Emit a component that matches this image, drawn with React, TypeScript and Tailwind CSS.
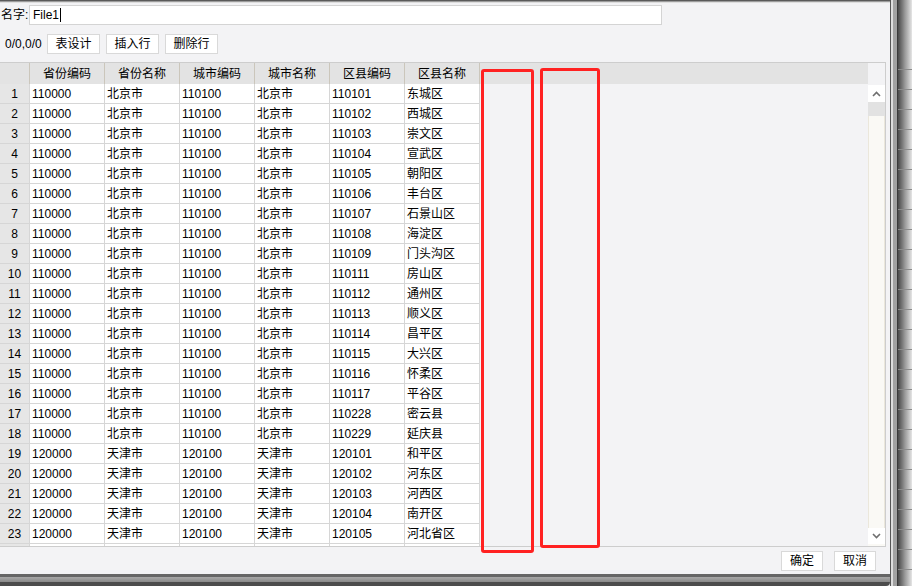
const HEADERS = ['省份编码', '省份名称', '城市编码', '城市名称', '区县编码', '区县名称'];

const DISTRICTS: [string, string][] = [
  ['110101', '东城区'],
  ['110102', '西城区'],
  ['110103', '崇文区'],
  ['110104', '宣武区'],
  ['110105', '朝阳区'],
  ['110106', '丰台区'],
  ['110107', '石景山区'],
  ['110108', '海淀区'],
  ['110109', '门头沟区'],
  ['110111', '房山区'],
  ['110112', '通州区'],
  ['110113', '顺义区'],
  ['110114', '昌平区'],
  ['110115', '大兴区'],
  ['110116', '怀柔区'],
  ['110117', '平谷区'],
  ['110228', '密云县'],
  ['110229', '延庆县'],
  ['120101', '和平区'],
  ['120102', '河东区'],
  ['120103', '河西区'],
  ['120104', '南开区'],
  ['120105', '河北省区'],
];

const ROWS = DISTRICTS.map(([code, name]) => {
  const bj = code.startsWith('11');
  return bj
    ? ['110000', '北京市', '110100', '北京市', code, name]
    : ['120000', '天津市', '120100', '天津市', code, name];
});

// partially scrolled-in row at the bottom, only its grid lines show
const BLANK = ['', '', '', '', '', ''];

const FONT = "font-['Liberation_Sans','Noto_Sans_CJK_SC',sans-serif]";

function Chevron({ down }: { down?: boolean }) {
  return (
    <svg width="9" height="6" viewBox="0 0 9 6" className={down ? 'rotate-180' : ''}>
      <path d="M1 5 L4.5 1.5 L8 5" fill="none" stroke="#6f6f6f" strokeWidth="1.6" />
    </svg>
  );
}

function Btn({ label, w }: { label: string; w: string }) {
  return (
    <div
      className={`${w} h-[20px] bg-white border border-[#d9d9d9] flex items-center justify-center leading-none whitespace-nowrap`}
    >
      {label}
    </div>
  );
}

function Row({ num, cells }: { num: string; cells: string[] }) {
  return (
    <div className="h-[20px] flex">
      <div className="w-[30px] border-r border-b border-[#d6d6d6] bg-[#e6e6e6] flex items-center justify-center leading-none">
        {num}
      </div>
      {cells.map((c, j) => (
        <div
          key={j}
          className="w-[75px] bg-white border-r border-b border-[#d6d6d6] flex items-center pl-[2px] leading-none whitespace-nowrap"
        >
          {c}
        </div>
      ))}
    </div>
  );
}

export default function App() {
  return (
    <div className={`w-[912px] h-[586px] overflow-hidden flex bg-[#e8e8e8] text-[12px] text-black ${FONT}`}>
      <div className="w-[890px] flex flex-col">
        {/* dialog */}
        <div className="relative h-[574px] flex flex-col bg-[#f3f3f5]">
          <div className="h-[1px] bg-[#5a5a5a]" />
          <div className="h-[1px] bg-[#9c9c9c]" />
          <div className="h-[1px] bg-[#dedede]" />

          <div className="mt-[2px] h-[20px] flex items-center">
            <span className="w-[29px] shrink-0 pl-[1px] leading-none whitespace-nowrap">名字:</span>
            <div className="w-[633px] h-[20px] bg-white border border-[#d4d4d4] flex items-center pl-[3px] leading-none">
              File1<span className="w-[1px] h-[14px] bg-black ml-[1px]" />
            </div>
          </div>

          <div className="mt-[9px] h-[20px] flex items-center gap-[6px] pl-[5px]">
            <span className="w-[36px] shrink-0 leading-none whitespace-nowrap">0/0,0/0</span>
            <Btn label="表设计" w="w-[53px]" />
            <Btn label="插入行" w="w-[53px]" />
            <Btn label="删除行" w="w-[53px]" />
          </div>

          {/* grid */}
          <div className="mt-[8px] w-[886px] h-[485px] border-t border-b border-r border-[#cdcdcd] flex">
            <div className="w-[868px] flex flex-col overflow-hidden">
              <div className="h-[21px] shrink-0 flex bg-[#e3e3e3]">
                <div className="w-[30px] border-r border-[#cbc6bb]" />
                {HEADERS.map((h) => (
                  <div
                    key={h}
                    className="w-[75px] border-r border-[#cbc6bb] flex items-center justify-center leading-none"
                  >
                    {h}
                  </div>
                ))}
              </div>
              <div className="flex-1 overflow-hidden">
                {ROWS.map((row, i) => (
                  <Row key={i} num={String(i + 1)} cells={row} />
                ))}
                <Row num="" cells={BLANK} />
              </div>
            </div>

            {/* vertical scrollbar */}
            <div className="w-[17px] flex flex-col">
              <div className="h-[22px] bg-[#f3f3f5]" />
              <div className="h-[17px] bg-white flex items-center justify-center">
                <Chevron />
              </div>
              <div className="h-[14px] bg-[#e2e2e2]" />
              <div className="flex-1 bg-[#faf9f5] border-l border-r border-[#ebe7db]" />
              <div className="h-[16px] bg-white flex items-center justify-center">
                <Chevron down />
              </div>
              <div className="h-[2px] bg-[#faf9f5]" />
            </div>
          </div>

          <div className="mt-[4px] h-[20px] flex justify-end gap-[11px] pr-[14px]">
            <Btn label="确定" w="w-[42px]" />
            <Btn label="取消" w="w-[42px]" />
          </div>

          {/* red annotation boxes */}
          <div className="absolute left-[481px] top-[69px] w-[53px] h-[484px] border-[3px] border-[#ff2121] rounded-[3px]" />
          <div className="absolute left-[540px] top-[68px] w-[60px] h-[480px] border-[3px] border-[#ff2121] rounded-[3px]" />
        </div>

        {/* bottom window frame */}
        <div className="h-[3px] bg-[#666]" />
        <div className="h-[5px] bg-linear-to-b from-[#a8a8a8] to-[#8a8a8a]" />
        <div className="h-[4px] bg-[#4c4c4c] rounded-br-[6px]" />
      </div>

      {/* right window frame and background sheet */}
      <div className="w-[1px] bg-[#555]" />
      <div className="w-[2px] bg-[#dedede]" />
      <div className="w-[4px] bg-[#a2a2a2]" />
      <div className="w-[1px] bg-[#3a3a3a]" />
      <div className="flex-1 flex flex-col bg-linear-to-r from-[#4a4a4a] via-[#9a9a9a] to-[#e6e6e6]">
        <div className="h-[50px] shrink-0" />
        {Array.from({ length: 27 }).map((_, i) => (
          <div key={i} className="h-[20px] shrink-0 border-b border-[#8c8c8c]" />
        ))}
      </div>
    </div>
  );
}
